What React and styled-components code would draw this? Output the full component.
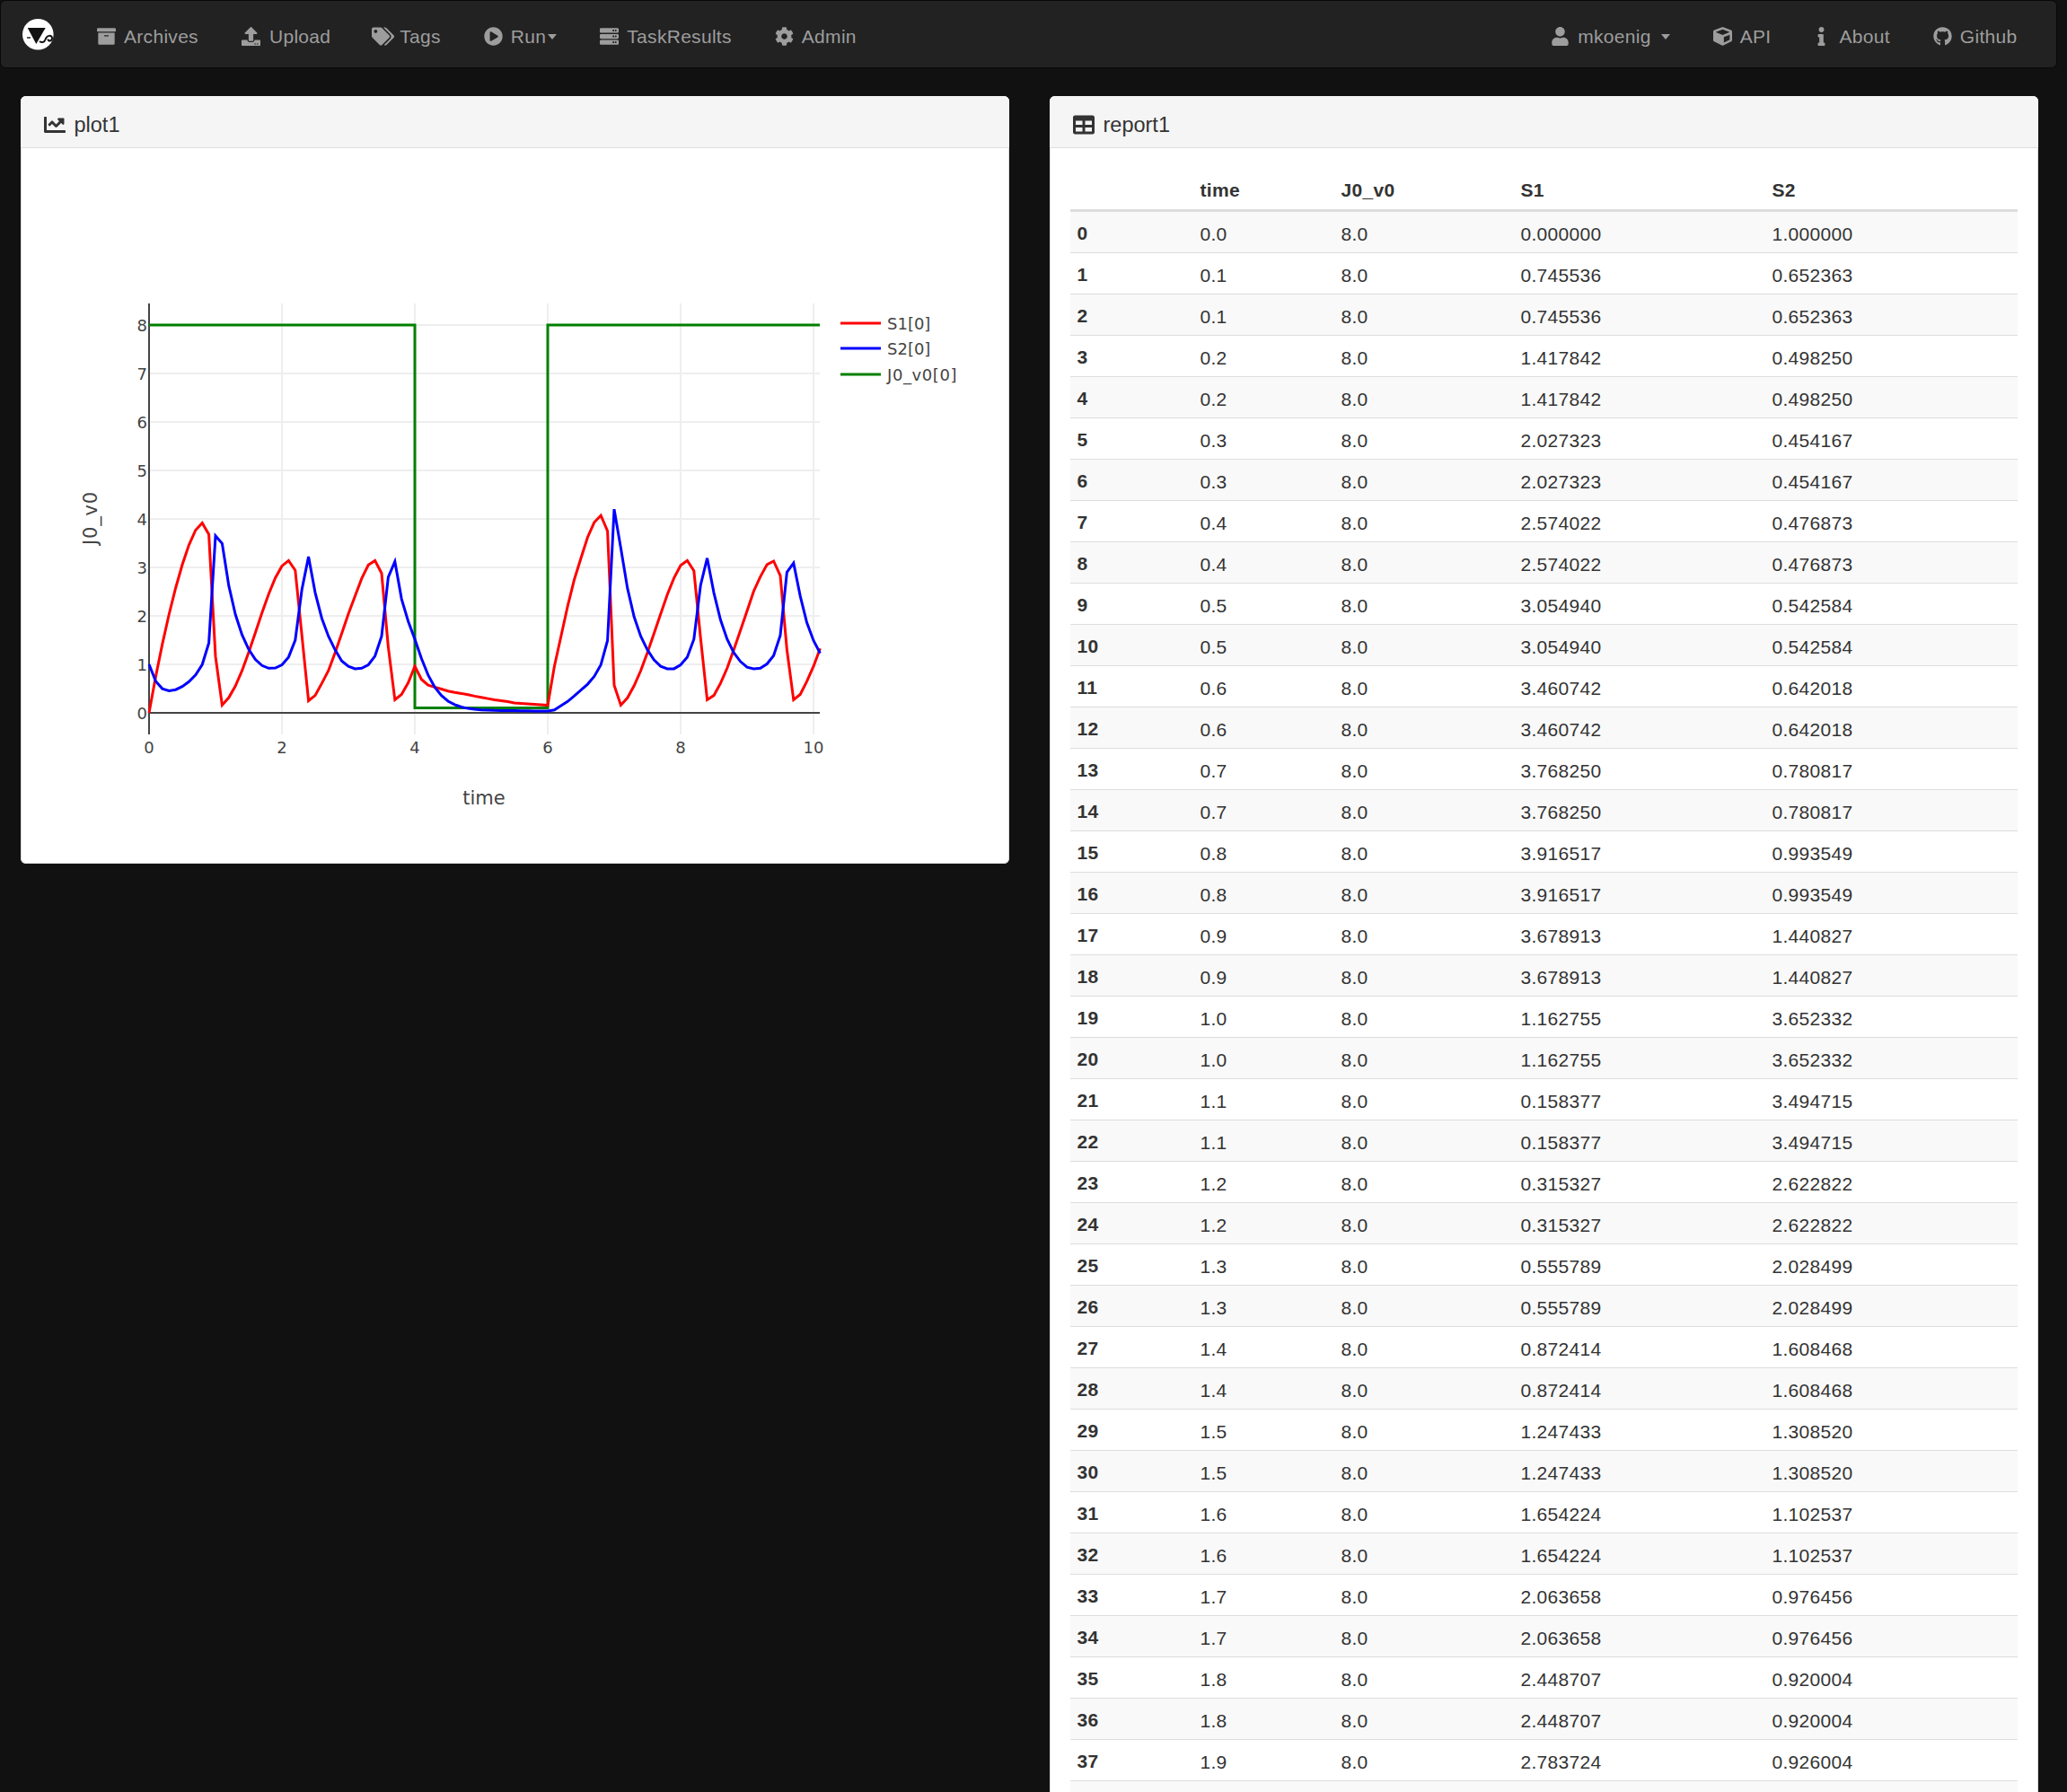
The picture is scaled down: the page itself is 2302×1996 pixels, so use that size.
import React from "react";
import styled, { createGlobalStyle } from "styled-components";
import {
  FaArchive,
  FaUpload,
  FaTags,
  FaPlayCircle,
  FaServer,
  FaCog,
  FaUser,
  FaCube,
  FaInfo,
  FaGithub,
  FaChartLine,
  FaTable,
} from "react-icons/fa";

const s1 = [
  0, 0.745536, 1.417842, 2.027323, 2.574022, 3.05494, 3.460742, 3.76825, 3.916517, 3.678913,
  1.162755, 0.158377, 0.315327, 0.555789, 0.872414, 1.247433, 1.654224, 2.063658, 2.448707, 2.783724,
  3.03, 3.14, 2.94, 1.6, 0.25, 0.36, 0.61, 0.87, 1.24, 1.64,
  2.04, 2.41, 2.77, 3.05, 3.14, 2.88, 1.36, 0.27, 0.38, 0.62,
  0.96, 0.69, 0.57, 0.53, 0.49, 0.45, 0.42, 0.4, 0.375, 0.345,
  0.32, 0.295, 0.27, 0.25, 0.23, 0.205, 0.195, 0.185, 0.175, 0.165,
  0.155, 0.96, 1.58, 2.2, 2.75, 3.19, 3.62, 3.93, 4.07, 3.75,
  0.57, 0.16, 0.31, 0.56, 0.87, 1.24, 1.64, 2.04, 2.44, 2.78,
  3.04, 3.14, 2.93, 1.55, 0.27, 0.36, 0.61, 0.92, 1.3, 1.7,
  2.1, 2.51, 2.81, 3.06, 3.13, 2.83, 1.3, 0.27, 0.38, 0.65,
  0.96, 1.33,
];

const s2 = [
  1, 0.652363, 0.49825, 0.454167, 0.476873, 0.542584, 0.642018, 0.780817, 0.993549, 1.440827,
  3.652332, 3.494715, 2.622822, 2.028499, 1.608468, 1.30852, 1.102537, 0.976456, 0.920004, 0.926004,
  0.99, 1.15, 1.5, 2.54, 3.22, 2.48, 1.95, 1.58, 1.3, 1.07,
  0.96, 0.91, 0.92, 0.99, 1.17, 1.58, 2.8, 3.12, 2.35, 1.89,
  1.52, 1.12, 0.78, 0.53, 0.36, 0.24, 0.17, 0.12, 0.09, 0.075,
  0.06, 0.055, 0.05, 0.048, 0.046, 0.044, 0.042, 0.04, 0.039, 0.038,
  0.037, 0.06, 0.15, 0.235, 0.35, 0.47, 0.59, 0.75, 0.99, 1.49,
  4.2, 3.4, 2.57, 1.98, 1.58, 1.3, 1.09, 0.96, 0.91, 0.91,
  0.99, 1.15, 1.52, 2.63, 3.19, 2.48, 1.92, 1.52, 1.24, 1.06,
  0.94, 0.91, 0.92, 1.01, 1.18, 1.6, 2.9, 3.09, 2.41, 1.86,
  1.49, 1.23,
];

// time values in the report come in pairs, row 0 being the only single one
const rows = Array.from({ length: 38 }, (_, i) => {
  const step = Math.ceil(i / 2);
  return {
    id: i,
    time: (step / 10).toFixed(1),
    s1: s1[step].toFixed(6),
    s2: s2[step].toFixed(6),
  };
});

const X0 = 143;
const Y0 = 629;
const px = (t) => X0 + t * 74;
const py = (v) => Y0 - v * 54;
const toPoints = (vals) => vals.map((v, i) => `${px(i / 10).toFixed(1)},${py(v).toFixed(1)}`).join(" ");

const GlobalStyle = createGlobalStyle`
  html, body {
    margin: 0;
    padding: 0;
    height: 100%;
    overflow: hidden;
    background: #111;
  }
  body {
    font-family: "Liberation Sans", Arial, sans-serif;
    font-size: 21px;
    line-height: 30px;
    letter-spacing: 0.3px;
    color: #333;
  }
`;

const Page = styled.div`
  height: 1996px;
  width: 2291px;
  overflow: hidden;
`;

const Navbar = styled.nav`
  display: flex;
  align-items: center;
  justify-content: space-between;
  box-sizing: border-box;
  width: 100%;
  height: 76px;
  padding: 0 43.5px 0 24px;
  background: #222;
  border: 1px solid #080808;
  border-radius: 6px;
`;

const NavGroup = styled.div`
  display: flex;
  align-items: center;
`;

const Brand = styled.a`
  display: flex;
  width: 35px;
  margin-right: 45px;
`;

const NavLink = styled.a`
  display: flex;
  align-items: center;
  box-sizing: border-box;
  height: 74px;
  padding-top: 5px;
  color: #9d9d9d;
  margin-left: ${(p) => p.$gap}px;
  white-space: nowrap;
`;

const IconBox = styled.span`
  display: flex;
  align-items: center;
  justify-content: center;
  box-sizing: border-box;
  width: ${(p) => p.$w || 33}px;
  padding-right: 6px;
  svg {
    width: ${(p) => p.$size || 21}px;
    height: ${(p) => p.$size || 21}px;
  }
`;

const Caret = styled.span`
  display: inline-block;
  width: 0;
  height: 0;
  margin-left: ${(p) => p.$gap}px;
  border-top: 6px solid #9d9d9d;
  border-left: 5.5px solid transparent;
  border-right: 5.5px solid transparent;
`;

const Columns = styled.div`
  display: grid;
  grid-template-columns: 1101px 1101px;
  column-gap: 45px;
  align-items: start;
  padding: 31px 0 0 23px;
`;

const Panel = styled.section`
  background: #fff;
  border-radius: 6px;
  overflow: hidden;
  box-shadow: inset 0 0 0 1px #ddd;
`;

const PanelHeading = styled.header`
  display: flex;
  align-items: center;
  gap: 10px;
  height: 51px;
  padding: 6px 25.5px 0;
  background: #f5f5f5;
  border-bottom: 1px solid #ddd;
  font-size: 23.5px;
  letter-spacing: 0;
  color: #333;
  svg {
    width: 24px;
    height: 24px;
  }
`;

const PlotBody = styled.div`
  height: 797px;
`;

const Plot = styled.svg`
  display: block;
  font-family: "DejaVu Sans", Verdana, sans-serif;
  letter-spacing: 0;
  fill: #444;
`;

const TableBody = styled.div`
  padding: 22.5px 24px 22.5px 23px;
`;

const Table = styled.table`
  width: 100%;
  table-layout: fixed;
  border-collapse: separate;
  border-spacing: 0;
`;

const HeadCell = styled.th`
  width: ${(p) => p.$w}px;
  height: 48px;
  padding: 3px 7.5px 0;
  box-sizing: border-box;
  text-align: left;
  font-weight: 700;
  border-bottom: 3px solid #ddd;
`;

const Row = styled.tr`
  background: ${(p) => (p.$striped ? "#f9f9f9" : "#fff")};
`;

const Cell = styled.td`
  height: 46px;
  box-sizing: border-box;
  padding: ${(p) => (p.$bold ? "4px" : "6px")} 7.5px 0;
  border-bottom: 1px solid #ddd;
  font-weight: ${(p) => (p.$bold ? 700 : 400)};
`;

const Logo = () => (
  <svg width="35" height="35" viewBox="0 0 35 35">
    <circle cx="17.3" cy="17.3" r="17.3" fill="#fff" />
    <path d="M5.7 10 L25.7 10 L15.3 28 Z" fill="#111" />
    <path d="M5 21 L9 21" fill="none" stroke="#111" strokeWidth="1.4" />
    <path
      d="M19 25 C22 27 24.5 26 25.5 23 C27 18 33 17.5 33 21.5 C33 25 28.5 25.5 28.5 22.5"
      fill="none"
      stroke="#111"
      strokeWidth="2"
    />
  </svg>
);

const leftLinks = [
  { label: "Archives", icon: <FaArchive />, gap: 0 },
  { label: "Upload", icon: <FaUpload />, w: 34, gap: 45 },
  { label: "Tags", icon: <FaTags />, size: 25, w: 32, gap: 45 },
  { label: "Run", icon: <FaPlayCircle />, caret: 2, gap: 45 },
  { label: "TaskResults", icon: <FaServer />, gap: 45 },
  { label: "Admin", icon: <FaCog />, gap: 45 },
];

const rightLinks = [
  { label: "mkoenig", icon: <FaUser />, caret: 11, gap: 0 },
  { label: "API", icon: <FaCube />, gap: 45 },
  { label: "About", icon: <FaInfo />, gap: 43 },
  { label: "Github", icon: <FaGithub />, gap: 45 },
];

const NavItems = ({ links }) =>
  links.map((link) => (
    <NavLink key={link.label} $gap={link.gap}>
      <IconBox $w={link.w} $size={link.size}>
        {link.icon}
      </IconBox>
      {link.label}
      {link.caret && <Caret $gap={link.caret} />}
    </NavLink>
  ));

const PlotChart = () => {
  const xTicks = [0, 2, 4, 6, 8, 10];
  const yTicks = [0, 1, 2, 3, 4, 5, 6, 7, 8];
  const legend = [
    { label: "S1[0]", color: "#f00", y: 195, spacing: 0 },
    { label: "S2[0]", color: "#00f", y: 223, spacing: 0 },
    { label: "J0_v0[0]", color: "#008000", y: 252, spacing: 0.6 },
  ];
  return (
    <Plot width="1101" height="797" viewBox="0 0 1101 797">
      {xTicks.slice(1).map((t) => (
        <line key={t} x1={px(t)} x2={px(t)} y1="173" y2="653" stroke="#eee" strokeWidth="2" />
      ))}
      {yTicks.slice(1).map((v) => (
        <line key={v} x1={X0} x2="890" y1={py(v)} y2={py(v)} stroke="#eee" strokeWidth="2" />
      ))}
      <line x1={X0} x2={X0} y1="173" y2="653" stroke="#444" strokeWidth="2" />
      <line x1={X0} x2="890" y1={Y0} y2={Y0} stroke="#444" strokeWidth="2" />
      <polyline
        points={`${px(0)},${py(8)} ${px(4)},${py(8)} ${px(4)},${py(0.1)} ${px(6)},${py(0.1)} ${px(6)},${py(8)} 890,${py(8)}`}
        fill="none"
        stroke="#008000"
        strokeWidth="3"
      />
      <polyline points={toPoints(s1)} fill="none" stroke="#f00" strokeWidth="3" />
      <polyline points={toPoints(s2)} fill="none" stroke="#00f" strokeWidth="3" />
      {xTicks.map((t) => (
        <text key={t} x={px(t)} y="674" fontSize="18" textAnchor="middle">
          {t}
        </text>
      ))}
      {yTicks.map((v) => (
        <text key={v} x="141" y={py(v) + 7} fontSize="18" textAnchor="end">
          {v}
        </text>
      ))}
      <text x="516" y="731" fontSize="21" textAnchor="middle">
        time
      </text>
      <text x="85" y="412" fontSize="21" letterSpacing="0.8" textAnchor="middle" transform="rotate(-90 85 412)">
        J0_v0
      </text>
      {legend.map((item) => (
        <g key={item.label}>
          <line x1="913" x2="958" y1={item.y} y2={item.y} stroke={item.color} strokeWidth="3" />
          <text x="965" y={item.y + 7} fontSize="18" letterSpacing={item.spacing}>
            {item.label}
          </text>
        </g>
      ))}
    </Plot>
  );
};

const App = () => (
  <Page>
    <GlobalStyle />
    <Navbar>
      <NavGroup>
        <Brand>
          <Logo />
        </Brand>
        <NavItems links={leftLinks} />
      </NavGroup>
      <NavGroup>
        <NavItems links={rightLinks} />
      </NavGroup>
    </Navbar>
    <Columns>
      <Panel>
        <PanelHeading>
          <FaChartLine />
          plot1
        </PanelHeading>
        <PlotBody>
          <PlotChart />
        </PlotBody>
      </Panel>
      <Panel>
        <PanelHeading>
          <FaTable />
          report1
        </PanelHeading>
        <TableBody>
          <Table>
            <thead>
              <tr>
                <HeadCell $w={137} />
                <HeadCell $w={157}>time</HeadCell>
                <HeadCell $w={200}>J0_v0</HeadCell>
                <HeadCell $w={280}>S1</HeadCell>
                <HeadCell $w={281}>S2</HeadCell>
              </tr>
            </thead>
            <tbody>
              {rows.map((row) => (
                <Row key={row.id} $striped={row.id % 2 === 0}>
                  <Cell $bold>{row.id}</Cell>
                  <Cell>{row.time}</Cell>
                  <Cell>8.0</Cell>
                  <Cell>{row.s1}</Cell>
                  <Cell>{row.s2}</Cell>
                </Row>
              ))}
              <Row $striped>
                <Cell colSpan={5} />
              </Row>
            </tbody>
          </Table>
        </TableBody>
      </Panel>
    </Columns>
  </Page>
);

export default App;
